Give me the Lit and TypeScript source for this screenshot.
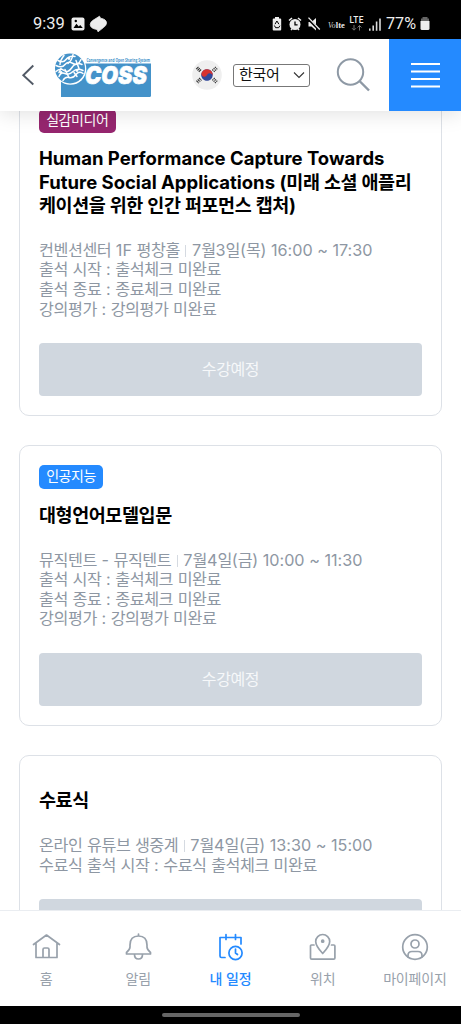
import { LitElement, html, css, svg, nothing } from 'lit';
import { customElement, property } from 'lit/decorators.js';

/** Splits a string so that Hangul runs get their own tighter tracking. */
const mixed = (text: string) =>
  text
    .split(/([\uac00-\ud7a3]+)/)
    .filter((run) => run !== '')
    .map((run) => (/[\uac00-\ud7a3]/.test(run) ? html`<span class="ko">${run}</span>` : run));

interface Lecture {
  tag?: string;
  tone?: string;
  title: string[];
  place: string;
  time: string;
  notes: string[];
}

const LECTURES: Lecture[] = [
  {
    tag: '실감미디어',
    tone: 'plum',
    title: ['Human Performance Capture Towards', 'Future Social Applications (미래 소셜 애플리', '케이션을 위한 인간 퍼포먼스 캡처)'],
    place: '컨벤션센터 1F 평창홀',
    time: '7월3일(목) 16:00 ~ 17:30',
    notes: ['출석 시작 : 출석체크 미완료', '출석 종료 : 종료체크 미완료', '강의평가 : 강의평가 미완료'],
  },
  {
    tag: '인공지능',
    tone: 'blue',
    title: ['대형언어모델입문'],
    place: '뮤직텐트 - 뮤직텐트',
    time: '7월4일(금) 10:00 ~ 11:30',
    notes: ['출석 시작 : 출석체크 미완료', '출석 종료 : 종료체크 미완료', '강의평가 : 강의평가 미완료'],
  },
  {
    title: ['수료식'],
    place: '온라인 유튜브 생중계',
    time: '7월4일(금) 13:30 ~ 15:00',
    notes: ['수료식 출석 시작 : 수료식 출석체크 미완료'],
  },
];

@customElement('status-bar')
class StatusBar extends LitElement {
  static styles = css`
    :host { display: flex; align-items: center; height: 39px; padding: 8px 31px 0 33px; box-sizing: border-box; background: #000; color: #eee; font-family: Roboto, sans-serif; }
    .clock { font-size: 16.5px; width: 38px; white-space: nowrap; }
    .left { display: block; flex: none; margin-right: auto; }
    svg { display: block; flex: none; overflow: visible; }
    .pct { font-size: 16.2px; width: 34px; margin-left: 2px; white-space: nowrap; }
  `;
  render() {
    return html`
      <span class="clock">9:39</span>
      <svg class="left" width="40" height="18" viewBox="0 0 40 18">
        <rect x="0.500" y="2.500" width="13" height="13" rx="2" fill="#eee" />
        <path d="M2.500 13 5.400 8.800 7.800 11.400 9.200 10 11.800 13Z" fill="#000" />
        <circle cx="4.800" cy="6" r="1.200" fill="#000" />
        <path d="M28.500 1.200 29.500 3.200q6 1 6 4.800 0 2.600-3 4.500l-5.500 4.300-1-2.300q-6.800-1-6.800-5 0-2.400 2.800-4.200Z" fill="#eee" stroke="#eee" stroke-width=".8" stroke-linejoin="round" />
      </svg>
      <svg width="115" height="20" viewBox="0 0 115 20">
        <g fill="#eee" transform="translate(1.500 0)">
          <path d="M4.500 3h4v1.500h1.200q1 0 1 1v10q0 1-1 1H3.200q-1 0-1-1v-10q0-1 1-1h1.300Z" />
          <path d="M4.500 10.200 6.400 7l2 3.200M3.900 11.500l1.200 2.200h3.100l1.200-2" fill="none" stroke="#000" />
          <circle cx="24.500" cy="10.500" r="5.500" />
          <path d="M18.500 6.500 21.500 4M27.500 4l3 2.500M20.500 16l1-1M28.500 16l-1-1" stroke="#eee" stroke-width="1.600" />
          <path d="M24.500 7.500v3.300h2.600" fill="none" stroke="#000" stroke-width="1.300" />
          <path d="M38 8h3l4.500-4v12.500L41 12.500h-3Z" />
          <path d="M37.300 4.300 49 16" stroke="#000" stroke-width="2.600" />
          <path d="M38 3.600 49.300 15.500" stroke="#eee" stroke-width="1.300" />
        </g>
        <text x="59" y="14" font-family="Liberation Serif, serif" font-style="italic" font-size="8.500" fill="#ddd" textLength="7.500" lengthAdjust="spacingAndGlyphs">Vo</text>
        <text x="66.800" y="14" font-family="Liberation Serif, serif" font-weight="700" font-size="8.500" fill="#eee" textLength="9" lengthAdjust="spacingAndGlyphs">lte</text>
        <text x="80.500" y="9.300" font-family="Roboto, sans-serif" font-weight="500" font-size="8.300" fill="#eee" textLength="14">LTE</text>
        <path d="M85 11v5m-2-1.800 2 2 2-2M90.500 16.500v-5m-2 2 2-2 2 2" fill="none" stroke="#777" />
        <path d="M100.800 14.500v2.300M104.200 11.500v5.300M107.600 7.500v9.300M111 4.500v12.300" stroke="#ddd" stroke-width="1.600" />
      </svg>
      <span class="pct">77%</span>
      <svg width="10" height="15" viewBox="0 0 10 15">
        <path d="M2.500 1h5v1.500H9V6H1V2.500h1.500Z" fill="#666" />
        <path d="M.5 5h9v7.500q0 1.500-1.500 1.500H2q-1.500 0-1.500-1.500Z" fill="#eee" />
      </svg>
    `;
  }
}

@customElement('top-header')
class TopHeader extends LitElement {
  static styles = css`
    :host { position: relative; z-index: 2; display: flex; align-items: center; height: 72px; background: #fff; box-shadow: 0 2px 20px rgba(0, 0, 0, 0.13); }
    svg { display: block; flex: none; overflow: visible; }
    .back { margin-left: 21px; }
    .logo { margin-left: 18px; }
    .flag { margin-left: 40px; }
    .lang { display: flex; align-items: center; justify-content: space-between; box-sizing: border-box; width: 77px; height: 23px; margin-left: 11px; padding: 0 4px 0 5px; border: 1px solid #777; border-radius: 3px; font: 15px/20px Inter, 'Noto Sans CJK KR', sans-serif; letter-spacing: -0.3px; color: #111; }
    .search { margin-left: 25.500px; }
    .menu { display: flex; align-items: center; justify-content: center; width: 72px; height: 72px; margin-left: auto; background: #248aff; }
  `;
  render() {
    return html`
      <svg class="back" width="14" height="22" viewBox="0 0 14 22"><path d="M12.300 1.500 2.300 11.300l10 9.200" fill="none" stroke="#525a66" stroke-width="1.900" /></svg>
      <svg class="logo" width="99" height="46" viewBox="0 0 99 46">
        <path d="M8 11.500h90v32q0 1.500-1.500 1.500H8Z" fill="#4492c9" />
        <circle cx="17.500" cy="17" r="15.800" fill="#fff" />
        <circle cx="17" cy="16.500" r="15" fill="#4492c9" />
        <g fill="none" stroke="#fff" stroke-width="1.500" stroke-linecap="round" transform="translate(0 .5)">
          <path d="M5 8q5 3 8-1t9-3M3 13q6 3 9-1t8-1 8-4M3 19q4-4 8-1t8-3 10-3M6 24q2-5 6-3t8-2 10-1M10 28q2-4 6-3t7-3 7-1" />
          <path d="M11 3q-4 5-4 9M20 2q-1 6-5 9M12 17l4 8M23 8l3 8M8 16l-2 4M21 20l3 4" />
        </g>
        <g fill="#fff"><circle cx="16" cy="6.500" r="1.400" /><circle cx="8" cy="20.500" r="1.400" /><circle cx="24" cy="18.500" r="1.400" /></g>
        <text x="33.500" y="9.500" font-family="Open Sans, sans-serif" font-weight="700" font-size="5.500" fill="#4492c9" textLength="63.500" lengthAdjust="spacingAndGlyphs">Convergence and Open Sharing System</text>
        <text x="32" y="32.200" font-family="Inter, sans-serif" font-style="italic" font-weight="900" font-size="24.500" fill="#fff" stroke="#fff" stroke-width=".6" textLength="62" lengthAdjust="spacingAndGlyphs">COSS</text>
      </svg>
      <svg class="flag" width="30" height="30" viewBox="0 0 30 30">
        <circle cx="15" cy="15" r="14.800" fill="#efefef" />
        <g transform="rotate(25 15 15)">
          <circle cx="15" cy="15" r="5.800" fill="#32499b" />
          <path d="M9.200 15a5.800 5.800 0 0 1 11.600 0 2.900 2.900 0 0 0-5.800 0 2.900 2.900 0 0 1-5.800 0Z" fill="#d6322f" />
        </g>
        <g stroke="#333" stroke-width="1.100" fill="none">
          <path d="M4.200 9.200 6.500 6.900M5.500 10.500l2.300-2.300M6.800 11.800l2.300-2.300" />
          <path d="m22.900 6.900 2.500 2.500M21.600 8.200l2.500 2.500M20.300 9.500l2.500 2.500" stroke-dasharray="1.400 .6" />
          <path d="m4.400 20.600 2.500 2.500M5.700 19.300l2.500 2.500M7 18l2.500 2.500" stroke-dasharray="2.400 .4 .8" />
          <path d="m25.300 20.600-2.500 2.500M24 19.300l-2.500 2.500M22.700 18l-2.500 2.500" stroke-dasharray="1.400 .6" />
        </g>
      </svg>
      <div class="lang"><span>한국어</span><svg width="12" height="8" viewBox="0 0 12 8"><path d="m1 1.500 5 5 5-5" fill="none" stroke="#333" stroke-width="1.100" /></svg></div>
      <svg class="search" width="35" height="36" viewBox="0 0 35 36"><circle cx="14.500" cy="15" r="12.700" fill="none" stroke="#8e99a5" stroke-width="2" /><path d="m23.500 24 9.500 9.500" stroke="#8e99a5" stroke-width="2.400" /></svg>
      <div class="menu"><svg width="29" height="26" viewBox="0 0 29 26"><path d="M0 2h29M0 9.500h29M0 17h29M0 24.500h29" stroke="#fff" stroke-width="2.200" /></svg></div>
    `;
  }
}

@customElement('lecture-card')
class LectureCard extends LitElement {
  @property({ attribute: false }) lecture!: Lecture;
  static styles = css`
    :host { display: block; box-sizing: border-box; border: 1px solid #dde1e7; border-radius: 10px; padding: 18.700px 19px 18.800px; background: #fff; }
    .ko { letter-spacing: var(--ko); }
    .tag { display: block; width: fit-content; height: 24.500px; box-sizing: border-box; padding: 0 7.200px; border-radius: 5px; color: #fff; font-size: 14px; line-height: 22px; --ko: -0.450px; }
    .plum { background: #96266f; }
    .blue { background: #248aff; }
    .title { margin: 14.300px 0 22.800px; font-size: 18.500px; line-height: 23.300px; font-weight: 700; color: #000; white-space: nowrap; --ko: -0.430px; }
    .meta { padding-top: 0.800px; font-size: 16.200px; line-height: 19.600px; color: #8e97a3; white-space: nowrap; --ko: -0.430px; }
    .sep { display: inline-block; width: 1px; height: 12px; margin: 0 5.500px; background: #d5dae1; vertical-align: -1px; }
    .action { display: flex; align-items: center; justify-content: center; width: 100%; height: 52.700px; margin-top: 24.200px; padding: 0 0 3px; border: 0; border-radius: 4px; background: #d0d7df; color: #f6f8fa; font: inherit; font-size: 16px; --ko: -0.4px; }
  `;
  render() {
    const l = this.lecture;
    return html`
      ${l.tag ? html`<span class="tag ${l.tone}">${mixed(l.tag)}</span>` : nothing}
      <div class="title">${l.title.map((t) => html`<div>${mixed(t)}</div>`)}</div>
      <div class="meta">
        <div>${mixed(l.place)}<span class="sep"></span>${mixed(l.time)}</div>
        ${l.notes.map((n) => html`<div>${mixed(n)}</div>`)}
      </div>
      <button class="action"><span>${mixed('수강예정')}</span></button>
    `;
  }
}

const TABS = [
  { label: '홈', icon: svg`<path d="M1.500 11.500 14.500 2l13 9.500M4 10v14.500h21V10M11 24.500v-8q0-1.500 1.500-1.500h3q1.500 0 1.500 1.500v8" />` },
  { label: '알림', icon: svg`<path d="M14.500 1v2M6 12q0-9 8.500-9t8.500 9v2q0 2.500 3.500 5.500v1.500H2.500v-1.500q3.500-3 3.500-5.500ZM10.500 21.500q0 4.500 4 4.500t4-4.500" />` },
  { label: '내 일정', on: true, icon: svg`<path d="M9 24.500H5.500q-1.500 0-1.500-1.500V4.500h21V11M10 1.500v5M19.500 1.500v5M19.500 16v4l2 1.500" /><circle cx="19.500" cy="20" r="6.600" />` },
  { label: '위치', icon: svg`<path d="M6 12H3.500Q2.500 12 2.500 13v12q0 1.200 1.200 1.200h22q1.200 0 1.200-1.200V13q0-1-1-1H23.500M14.700 20.500Q7.700 13 7.700 8.500a7 7 0 0 1 14 0q0 4.500-7 12Z" /><circle cx="14.700" cy="8.200" r="1" fill="currentColor" />` },
  { label: '마이페이지', icon: svg`<circle cx="15" cy="14" r="12.300" /><circle cx="15" cy="11" r="4" /><path d="M8 24v-1.500q0-4 4-4h6q4 0 4 4V24" />` },
];

@customElement('tab-bar')
class TabBar extends LitElement {
  static styles = css`
    :host { position: relative; z-index: 1; display: grid; grid-template-columns: repeat(5, 1fr); box-sizing: border-box; height: 96px; border-top: 1px solid #eaedf1; background: #fff; }
    .tab { display: flex; flex-direction: column; align-items: center; padding-top: 22px; color: #98a1ab; }
    .on { color: #248aff; font-weight: 500; }
    svg { display: block; fill: none; stroke: currentColor; stroke-width: 1.700; stroke-linejoin: round; stroke-linecap: round; }
    .label { margin-top: 9px; font-size: 14px; line-height: 18px; white-space: nowrap; }
    .ko { letter-spacing: -0.200px; }
  `;
  render() {
    return TABS.map(
      (t) => html`<div class="tab ${t.on ? 'on' : ''}"><svg width="29" height="28" viewBox="0 0 29 28">${t.icon}</svg><span class="label">${mixed(t.label)}</span></div>`,
    );
  }
}

@customElement('app-root')
class AppRoot extends LitElement {
  static styles = css`
    :host { display: flex; flex-direction: column; height: 1024px; overflow: hidden; background: #fff; font-family: Inter, 'Noto Sans CJK KR', sans-serif; }
    .list { flex: 1; min-height: 0; overflow: hidden; }
    .stack { display: flex; flex-direction: column; gap: 29.400px; margin: -22.200px 19px 0 19px; }
    .home { display: flex; justify-content: center; align-items: center; height: 18.500px; background: #000; }
    .pill { width: 138px; height: 4.500px; border-radius: 3px; background: #666; }
  `;
  render() {
    return html`
      <status-bar></status-bar>
      <top-header></top-header>
      <main class="list"><div class="stack">${LECTURES.map((l) => html`<lecture-card .lecture=${l}></lecture-card>`)}</div></main>
      <tab-bar></tab-bar>
      <div class="home"><span class="pill"></span></div>
    `;
  }
}
